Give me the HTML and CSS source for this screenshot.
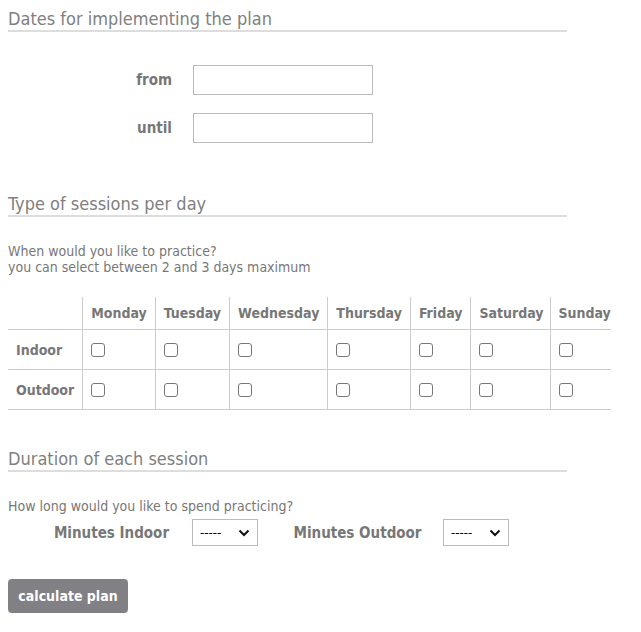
FILE: index.html
```html
<!DOCTYPE html>
<html>
<head>
<meta charset="utf-8">
<link rel="stylesheet" href="styles.css">
</head>
<body>
<div class="page">
  <h2 class="section-title first">Dates for implementing the plan</h2>
  <div class="dates">
    <label class="field-label">from</label>
    <input class="text-input" type="text">
    <label class="field-label">until</label>
    <input class="text-input" type="text">
  </div>

  <h2 class="section-title second">Type of sessions per day</h2>
  <p class="hint">When would you like to practice?<br>you can select between 2 and 3 days maximum</p>
  <table class="days">
    <thead>
      <tr>
        <th class="corner"></th>
        <th>Monday</th><th>Tuesday</th><th>Wednesday</th><th>Thursday</th><th>Friday</th><th>Saturday</th><th>Sunday</th>
      </tr>
    </thead>
    <tbody>
      <tr>
        <th class="row-label">Indoor</th>
        <td><input class="box" type="checkbox"></td><td><input class="box" type="checkbox"></td><td><input class="box" type="checkbox"></td><td><input class="box" type="checkbox"></td><td><input class="box" type="checkbox"></td><td><input class="box" type="checkbox"></td><td><input class="box" type="checkbox"></td>
      </tr>
      <tr>
        <th class="row-label">Outdoor</th>
        <td><input class="box" type="checkbox"></td><td><input class="box" type="checkbox"></td><td><input class="box" type="checkbox"></td><td><input class="box" type="checkbox"></td><td><input class="box" type="checkbox"></td><td><input class="box" type="checkbox"></td><td><input class="box" type="checkbox"></td>
      </tr>
    </tbody>
  </table>

  <h2 class="section-title third">Duration of each session</h2>
  <p class="hint single">How long would you like to spend practicing?</p>
  <div class="minutes">
    <label class="field-label min-label indoor">Minutes Indoor</label>
    <select class="sel"><option>-----</option></select>
    <label class="field-label min-label outdoor">Minutes Outdoor</label>
    <select class="sel"><option>-----</option></select>
  </div>

  <button class="calc" type="button">calculate plan</button>
</div>
</body>
</html>
```

FILE: styles.css
```css
html, body {
  margin: 0;
  padding: 0;
  background: #fff;
}
body {
  padding: 8px;
  font-family: "DejaVu Sans Condensed", "DejaVu Sans", sans-serif;
  color: #777;
}
.page {
  display: flex;
  flex-direction: column;
  align-items: flex-start;
}
.section-title {
  width: 559px;
  margin: 0;
  font-size: 18px;
  font-weight: normal;
  line-height: 22px;
  color: #808080;
  border-bottom: 2px solid #ddd;
}
.second { margin-top: 50px; }
.third { margin-top: 38px; }
.dates {
  display: grid;
  grid-template-columns: 164px 180px;
  column-gap: 21px;
  row-gap: 18px;
  align-items: center;
  margin-top: 33px;
}
.field-label {
  font-weight: bold;
  font-size: 15px;
  color: #777;
  text-align: right;
}
.text-input {
  box-sizing: border-box;
  width: 180px;
  height: 30px;
  margin: 0;
  border: 1px solid #bbb;
  background: #fff;
}
.hint {
  margin: 26px 0 0;
  font-size: 14px;
  line-height: 16px;
  color: #777;
}
.single { margin-top: 26px; }
.days {
  border-collapse: collapse;
  margin-top: 22px;
  font-size: 14px;
  color: #777;
}
.days th, .days td {
  border-bottom: 1px solid #ccc;
  border-left: 1px solid #ccc;
  text-align: left;
  padding: 0 8px;
}
.days th:nth-child(7), .days td:nth-child(7) {
  padding-right: 6px;
}
.days th:last-child, .days td:last-child {
  padding-right: 0;
}
.days thead th {
  height: 32px;
  font-weight: bold;
}
.days th.corner,
.days th.row-label {
  border-left: none;
}
.days tbody th, .days tbody td {
  height: 39px;
}
.days th.row-label { font-weight: bold; }
.box {
  -webkit-appearance: none;
  appearance: none;
  display: block;
  box-sizing: border-box;
  margin: 0;
  width: 14px;
  height: 14px;
  border: 1px solid #777;
  border-radius: 3px;
  background: #fff;
}
.minutes {
  display: flex;
  align-items: center;
  margin-top: 5px;
}
.min-label { text-align: center; }
.indoor { margin-left: 43px; width: 121px; }
.outdoor { margin-left: 32px; width: 135px; }
.sel {
  -webkit-appearance: none;
  appearance: none;
  box-sizing: border-box;
  width: 66px;
  height: 27px;
  margin: 0 0 0 20px;
  padding: 0 0 0 7px;
  border: 1px solid #bbb;
  border-radius: 0;
  background-color: #fff;
  background-image: url("data:image/svg+xml;utf8,<svg xmlns='http://www.w3.org/2000/svg' width='12' height='8' viewBox='0 0 12 8'><path d='M1.5 1.5 L6 6 L10.5 1.5' fill='none' stroke='%23111' stroke-width='2'/></svg>");
  background-repeat: no-repeat;
  background-position: right 7px center;
  font-family: "DejaVu Sans Condensed", "DejaVu Sans", sans-serif;
  font-size: 13px;
  color: #000;
}
.outdoor + .sel { margin-left: 18px; }
.calc {
  margin-top: 33px;
  width: 120px;
  height: 34px;
  border: none;
  border-radius: 4px;
  background: #808085;
  color: #fff;
  font-family: "DejaVu Sans Condensed", "DejaVu Sans", sans-serif;
  font-weight: bold;
  font-size: 14px;
  padding: 0;
}
```
